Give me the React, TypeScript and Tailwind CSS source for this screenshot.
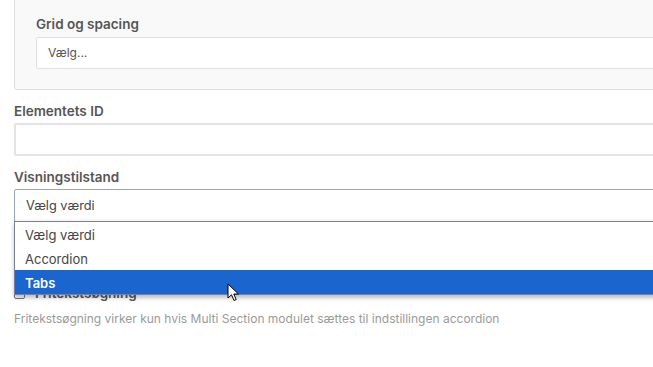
import React from "react";

export default function App() {
  return (
    <div className="relative w-[653px] h-[367px] overflow-hidden bg-white font-['Inter',sans-serif] text-[#555]">
      <div className="w-[780px] pl-[14px]">
        {/* Panel */}
        <div className="-mt-[20px] pt-[34px] pb-[20px] pl-[21px] bg-[#f9f9f9] border border-[#dedede] rounded-[3px]">
          <div className="text-[13.5px] leading-[18px] font-semibold text-[#555] mb-[4px]">Grid og spacing</div>
          <div className="h-[32px] bg-white border border-[#e0e0e0] rounded-[2px] flex items-center pl-[11px] text-[12px] text-[#555]">
            Vælg...
          </div>
        </div>

        <div className="mt-[12px] text-[13.5px] leading-[18px] font-semibold text-[#555] mb-[3px]">Elementets ID</div>
        <div className="h-[33px] bg-white border-2 border-[#e4e4e4] rounded-[2px]" />

        <div className="mt-[12px] text-[13.5px] leading-[18px] font-semibold text-[#555] mb-[3px]">Visningstilstand</div>
        <div className="relative">
          <div className="h-[33px] bg-white border border-[#95a9c4] rounded-[2px] flex items-center pl-[11px] text-[12.75px] text-[#444] shadow-[inset_0_-4px_4px_-3px_rgba(0,0,0,0.06)]">
            Vælg værdi
          </div>
          {/* Dropdown list */}
          <div className="absolute left-0 top-[32px] w-[760px] bg-white border border-[#7b7f98] shadow-[0_3px_4px_rgba(0,0,0,0.25)] z-10 text-[13px]">
            <div className="h-[24px] flex items-center pl-[10px] pt-[4px] text-[#444]">Vælg værdi</div>
            <div className="h-[24px] flex items-center pl-[10px] pt-[3px] text-[#444]">Accordion</div>
            <div className="h-[24px] flex items-center pl-[10px] pt-[3px] bg-[#1b65cf] text-white font-semibold">Tabs</div>
          </div>
        </div>

        <div className="mt-[62px] flex items-center gap-[10px]">
          <div className="w-[11px] h-[11px] border border-[#777] rounded-[2px] bg-white" />
          <div className="text-[13.5px] leading-[18px] font-semibold text-[#555]">Fritekstsøgning</div>
        </div>
        <div className="mt-[9px] text-[12px] leading-[16px] text-[#9a9a9a]">
          Fritekstsøgning virker kun hvis Multi Section modulet sættes til indstillingen accordion
        </div>
      </div>

      {/* Mouse cursor */}
      <svg className="absolute left-[227px] top-[283px] z-20" width="13" height="19" viewBox="0 0 13 19">
        <path d="M1 1 L1 15 L4.5 11.8 L7 17.5 L9.2 16.6 L6.8 11 L11.5 11 Z" fill="white" stroke="black" strokeWidth="1" strokeLinejoin="round" />
      </svg>
    </div>
  );
}
